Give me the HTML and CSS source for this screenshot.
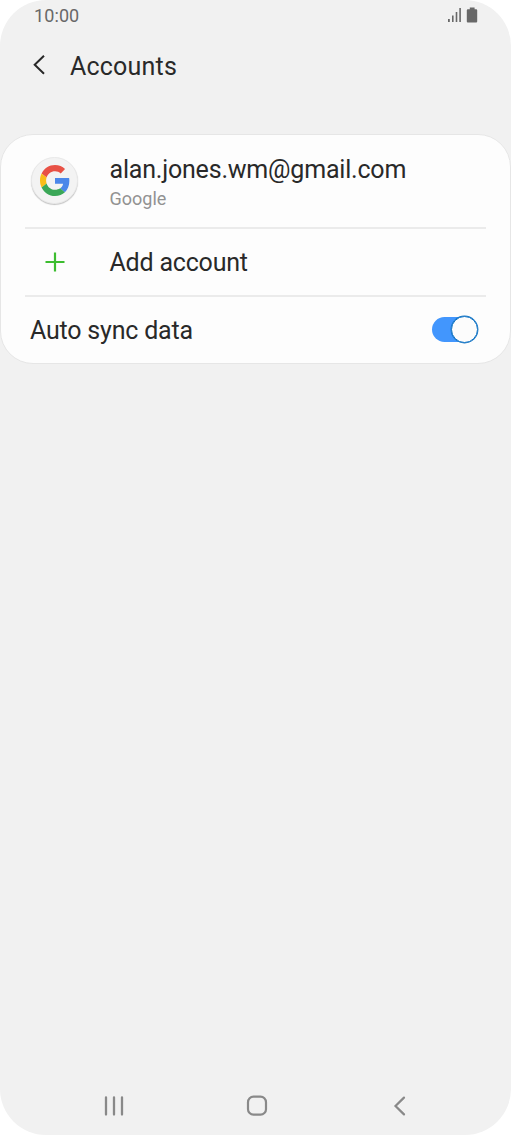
FILE: index.html
```html
<!DOCTYPE html>
<html lang="en">
<head>
<meta charset="utf-8">
<title>Accounts</title>
<link rel="stylesheet" href="styles.css">
</head>
<body>
<div class="screen">
  <div class="status">
    <span class="clock">10:00</span>
    <svg class="status-icons" width="32" height="18" viewBox="0 0 32 18" fill="#686868">
      <path d="M1 12h1.800v3H1zM5 8.500h1.600V15H5zM8.700 5h1.600v10H8.700zM12.300 1h1.600v14h-1.600z"/>
      <path d="M20.800 2.200h2V.5h4.800v1.700h1.600q1 0 1 1v11.300q0 1-1 1h-8.400q-1 0-1-1V3.200q0-1 1-1z"/>
    </svg>
  </div>
  <header class="header">
    <svg class="back" width="14" height="22" viewBox="0 0 14 22"><path d="M11 1.700 1.700 10.700l9.300 9" fill="none" stroke="#292929" stroke-width="2"/></svg>
    <h1 class="title">Accounts</h1>
  </header>
  <main class="card">
    <div class="row account">
      <div class="leading"><div class="avatar">
        <svg width="30" height="31" viewBox="0 0 48 48" preserveAspectRatio="none">
          <path fill="#e85145" d="M24 9.500c3.540 0 6.710 1.220 9.210 3.600l6.850-6.850C35.900 2.380 30.470 0 24 0 14.620 0 6.510 5.380 2.560 13.220l7.980 6.190C12.430 13.720 17.740 9.500 24 9.500z"/>
          <path fill="#4b87ea" d="M46.980 24.550c0-1.570-.15-3.090-.38-4.550H24v9.020h12.940c-.58 2.960-2.260 5.480-4.780 7.180l7.730 6c4.510-4.180 7.090-10.360 7.090-17.650z"/>
          <path fill="#f9bd18" d="M10.530 28.590c-.48-1.450-.76-2.990-.76-4.590s.27-3.140.76-4.590l-7.980-6.190C.92 16.460 0 20.120 0 24s.92 7.540 2.560 10.780l7.970-6.190z"/>
          <path fill="#3aa757" d="M24 48c6.480 0 11.930-2.130 15.890-5.810l-7.730-6c-2.150 1.450-4.920 2.300-8.160 2.300-6.260 0-11.570-4.220-13.470-9.910l-7.980 6.190C6.510 42.620 14.620 48 24 48z"/>
        </svg>
      </div></div>
      <div class="text"><div class="label">alan.jones.wm@gmail.com</div><div class="sub">Google</div></div>
    </div>
    <div class="row add">
      <div class="leading"><svg width="20" height="20" viewBox="0 0 20 20"><path d="M10 .5v19M.5 10h19" stroke="#3dbd30" stroke-width="2.200"/></svg></div>
      <div class="label">Add account</div>
    </div>
    <div class="row sync">
      <div class="label">Auto sync data</div>
      <div class="switch"><div class="knob"></div></div>
    </div>
  </main>
  <nav class="nav">
    <svg width="20" height="22" viewBox="0 0 20 22"><path d="M2 2.500v17M10 2.500v17M18 2.500v17" stroke="#898989" stroke-width="2.300" stroke-linecap="round"/></svg>
    <svg class="home" width="22" height="22" viewBox="0 0 22 22"><rect x="2" y="1.700" width="18" height="18" rx="5.500" fill="none" stroke="#898989" stroke-width="2.200"/></svg>
    <svg width="14" height="22" viewBox="0 0 14 22"><path d="M11 2.600 2.500 11l8.500 8.400" fill="none" stroke="#898989" stroke-width="2.200" stroke-linecap="round"/></svg>
  </nav>
</div>
</body>
</html>
```
FILE: styles.css
```css
* { box-sizing: border-box; }
body { margin: 0; background: #fff; font-family: Roboto, sans-serif; color: #292929; }
svg { display: block; flex: none; }
.screen { width: 511px; height: 1135px; background: #f1f1f1; border-radius: 46px; display: flex; flex-direction: column; overflow: hidden; }
.status { height: 34px; padding: 7px 32px 0 34px; display: flex; justify-content: space-between; }
.clock { margin-top: -1px; font-size: 18px; line-height: 19px; letter-spacing: .1px; color: #686868; }
.header { height: 100px; padding: 20px 0 0 33px; display: flex; align-items: flex-start; }
.title { margin: -3px 0 0 23px; font-size: 25px; line-height: 32px; font-weight: 400; letter-spacing: .2px; }
.card { height: 230px; background: #fdfdfd; border: 1px solid #e6e6e6; border-radius: 33px; padding: 0 24px; }
.row { display: flex; align-items: center; }
.account { height: 94px; border-bottom: 2px solid #ebebeb; }
.add { height: 68px; border-bottom: 2px solid #ebebeb; }
.sync { height: 66px; justify-content: space-between; padding: 0 8px 0 5px; }
.leading { width: 84.500px; padding-left: 6px; }
.account .leading { padding-bottom: 2px; }
.add .leading { padding-left: 20px; padding-bottom: 1px; }
.avatar { width: 47px; height: 47px; border-radius: 50%; background: #f3f3f3; border: 1px solid #e9e9e9; box-shadow: 0 1px 1px #c4c4c4; display: flex; align-items: center; justify-content: center; }
.label { padding-top: 2px; font-size: 25px; line-height: 32px; letter-spacing: -.2px; white-space: nowrap; }
.sub { font-size: 18px; line-height: 22px; color: #929292; margin-top: 2px; }
.switch { width: 46px; height: 25px; margin-bottom: 2px; border-radius: 13px; background: #4296fd; display: flex; align-items: center; justify-content: flex-end; }
.knob { width: 27px; height: 27px; flex: none; border: 1.500px solid #1475c5; border-radius: 50%; background: #fcfcfc; box-shadow: 0 0 0 .4px #1475c5; }
.nav { margin-top: auto; height: 40px; padding: 0 104px; display: flex; justify-content: space-between; }
.home { margin-right: 4px; }
```
